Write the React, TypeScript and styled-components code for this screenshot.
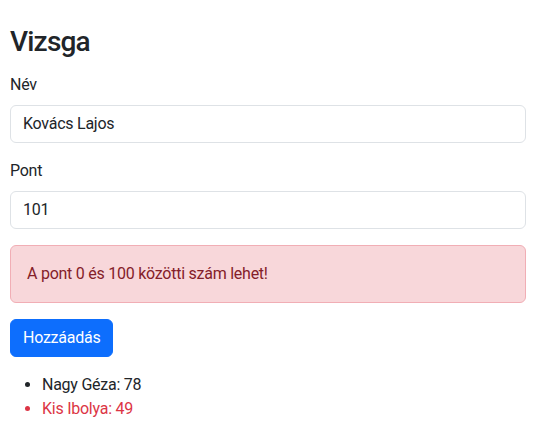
import React from "react";
import styled, { createGlobalStyle } from "styled-components";

const Global = createGlobalStyle`
  *, *::before, *::after { box-sizing: border-box; }
  body {
    margin: 0;
    background: #fff;
    color: #212529;
    font-family: Roboto, "Noto Sans", "Liberation Sans", sans-serif;
    font-size: 16px;
    line-height: 1.5;
    letter-spacing: -0.25px;
  }
`;

const Page = styled.div`
  padding: 25px 14px 0 10px;
`;

const Title = styled.h1`
  margin: 0 0 14px;
  font-size: 28px;
  font-weight: 500;
  line-height: 1.2;
  letter-spacing: -0.8px;
`;

const Field = styled.div`
  margin-bottom: 16px;
`;

const Label = styled.label`
  display: block;
  margin-bottom: 8px;
`;

const Input = styled.input`
  display: block;
  width: 100%;
  height: 38px;
  padding: 6px 12px;
  font: inherit;
  letter-spacing: inherit;
  color: #212529;
  background: #fff;
  border: 1px solid #dee2e6;
  border-radius: 6px;
  outline: none;
`;

const Alert = styled.div`
  margin-bottom: 16px;
  padding: 16px;
  color: #842029;
  background: #f8d7da;
  border: 1px solid #f1aeb5;
  border-radius: 6px;
`;

const Button = styled.button`
  display: block;
  margin-bottom: 16px;
  padding: 6px 12px;
  height: 38px;
  font: inherit;
  letter-spacing: inherit;
  color: #fff;
  background: #0d6efd;
  border: 1px solid #0d6efd;
  border-radius: 6px;
`;

const List = styled.ul`
  margin: 0;
  padding-left: 32px;
`;

const Item = styled.li<{ $danger?: boolean }>`
  color: ${(p) => (p.$danger ? "#dc3545" : "#212529")};
`;

const students = [
  { name: "Nagy Géza", points: 78 },
  { name: "Kis Ibolya", points: 49 },
];

export default function App() {
  return (
    <Page>
      <Global />
      <Title>Vizsga</Title>
      <Field>
        <Label>Név</Label>
        <Input defaultValue="Kovács Lajos" />
      </Field>
      <Field>
        <Label>Pont</Label>
        <Input defaultValue="101" />
      </Field>
      <Alert>A pont 0 és 100 közötti szám lehet!</Alert>
      <Button>Hozzáadás</Button>
      <List>
        {students.map((s) => (
          <Item key={s.name} $danger={s.points < 50}>
            {s.name}: {s.points}
          </Item>
        ))}
      </List>
    </Page>
  );
}
